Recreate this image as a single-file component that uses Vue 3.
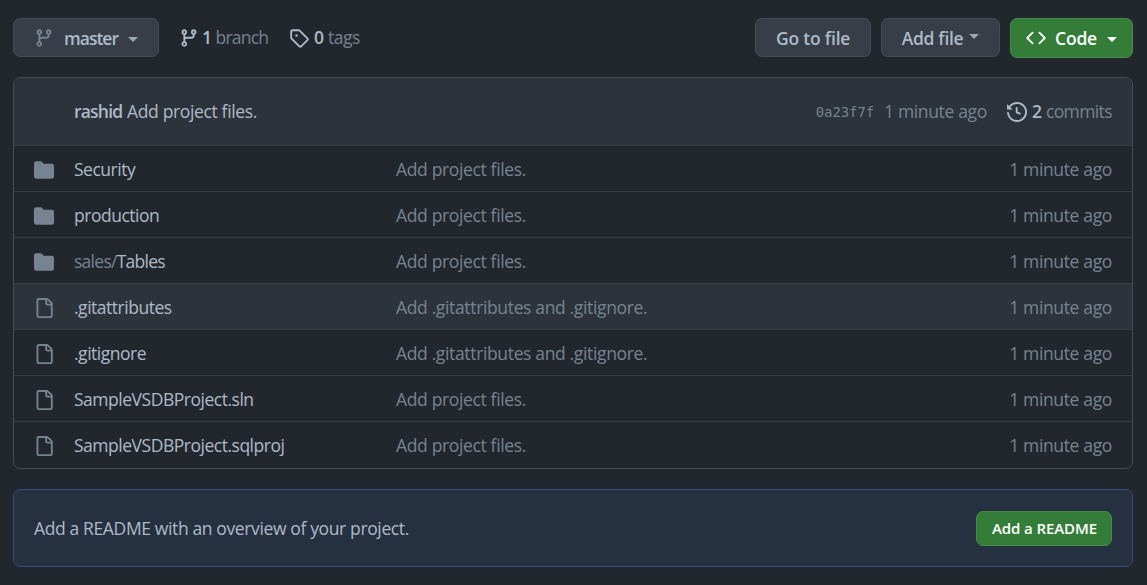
<script setup>
const paths = {
  branch: 'M11.75 2.5a.75.75 0 100 1.5.75.75 0 000-1.5zm-2.25.75a2.25 2.25 0 113 2.122V6A2.5 2.5 0 0110 8.5H6a1 1 0 00-1 1v1.128a2.251 2.251 0 11-1.5 0V5.372a2.25 2.25 0 111.5 0v1.836A2.492 2.492 0 016 7h4a1 1 0 001-1v-.628A2.25 2.25 0 019.5 3.25zM4.25 12a.75.75 0 100 1.5.75.75 0 000-1.5zM3.5 3.25a.75.75 0 111.5 0 .75.75 0 01-1.5 0z',
  tag: 'M2.5 7.775V2.75a.25.25 0 01.25-.25h5.025a.25.25 0 01.177.073l6.25 6.25a.25.25 0 010 .354l-5.025 5.025a.25.25 0 01-.354 0l-6.25-6.25a.25.25 0 01-.073-.177zm-1.5 0V2.75C1 1.784 1.784 1 2.75 1h5.025c.464 0 .91.184 1.238.513l6.25 6.25a1.75 1.75 0 010 2.474l-5.026 5.026a1.75 1.75 0 01-2.474 0l-6.25-6.25A1.75 1.75 0 011 7.775zM6 5a1 1 0 100 2 1 1 0 000-2z',
  code: 'M4.72 3.22a.75.75 0 011.06 1.06L2.06 8l3.72 3.72a.75.75 0 11-1.06 1.06L.47 8.53a.75.75 0 010-1.06l4.25-4.25zm6.56 0a.75.75 0 10-1.06 1.06L13.94 8l-3.72 3.72a.75.75 0 101.06 1.06l4.25-4.25a.75.75 0 000-1.06l-4.25-4.25z',
  history: 'M1.643 3.143L.427 1.927A.25.25 0 000 2.104V5.75c0 .138.112.25.25.25h3.646a.25.25 0 00.177-.427L2.715 4.215a6.5 6.5 0 11-1.18 4.458.75.75 0 10-1.493.154 8.001 8.001 0 101.6-5.684zM7.75 4a.75.75 0 01.75.75v2.992l2.028.812a.75.75 0 01-.557 1.392l-2.5-1A.75.75 0 017 8.25v-3.5A.75.75 0 017.75 4z',
  folder: 'M1.75 1A1.75 1.75 0 000 2.75v10.5C0 14.216.784 15 1.75 15h12.5A1.75 1.75 0 0016 13.25v-8.5A1.75 1.75 0 0014.25 3h-6.5a.25.25 0 01-.2-.1l-.9-1.2c-.33-.44-.85-.7-1.4-.7h-3.5z',
  file: 'M2 1.75C2 .784 2.784 0 3.75 0h6.586c.464 0 .909.184 1.237.513l2.914 2.914c.329.328.513.773.513 1.237v9.586A1.75 1.75 0 0113.25 16h-9.5A1.75 1.75 0 012 14.25V1.75zm1.75-.25a.25.25 0 00-.25.25v12.5c0 .138.112.25.25.25h9.5a.25.25 0 00.25-.25V6h-2.75A1.75 1.75 0 019 4.25V1.5H3.75zm6.75.062V4.25c0 .138.112.25.25.25h2.688a.252.252 0 00-.011-.013l-2.914-2.914a.272.272 0 00-.013-.011z',
}

const both = 'Add .gitattributes and .gitignore.'
const project = 'Add project files.'
const rows = [
  { icon: 'folder', name: 'Security', message: project },
  { icon: 'folder', name: 'production', message: project },
  { icon: 'folder', prefix: 'sales/', name: 'Tables', message: project },
  { icon: 'file', name: '.gitattributes', message: both, active: true },
  { icon: 'file', name: '.gitignore', message: both },
  { icon: 'file', name: 'SampleVSDBProject.sln', message: project },
  { icon: 'file', name: 'SampleVSDBProject.sqlproj', message: project },
]
</script>

<template>
  <main class="repo">
    <div class="toolbar">
      <button class="btn master">
        <svg class="icon" viewBox="0 0 16 16"><path :d="paths.branch" /></svg>
        <span>master</span><i class="caret"></i>
      </button>
      <a class="stat branches">
        <svg class="icon" viewBox="0 0 16 16"><path :d="paths.branch" /></svg>
        <b>1</b><span>branch</span>
      </a>
      <a class="stat tags">
        <svg class="icon" viewBox="0 0 16 16"><path :d="paths.tag" /></svg>
        <b>0</b><span>tags</span>
      </a>
      <div class="actions">
        <button class="btn goto"><span>Go to file</span></button>
        <button class="btn add"><span>Add file</span><i class="caret"></i></button>
        <button class="btn primary code">
          <svg class="icon" viewBox="0 0 16 16"><path :d="paths.code" /></svg>
          <span>Code</span><i class="caret"></i>
        </button>
      </div>
    </div>

    <section class="files">
      <header class="commit">
        <b class="author">rashid</b>
        <span class="title">Add project files.</span>
        <code class="sha">0a23f7f</code>
        <span class="ago">1 minute ago</span>
        <a class="stat commits">
          <svg class="icon" viewBox="0 0 16 16"><path :d="paths.history" /></svg>
          <b>2</b><span>commits</span>
        </a>
      </header>
      <div v-for="row in rows" :key="row.name" class="row" :class="{ active: row.active }">
        <svg class="icon" viewBox="0 0 16 16"><path :d="paths[row.icon]" /></svg>
        <span class="name" :class="{ nested: row.prefix }"><span v-if="row.prefix" class="prefix">{{ row.prefix }}</span>{{ row.name }}</span>
        <span class="message">{{ row.message }}</span>
        <span class="ago">1 minute ago</span>
      </div>
    </section>

    <section class="readme">
      <span class="hint">Add a README with an overview of your project.</span>
      <button class="btn primary small"><span>Add a README</span></button>
    </section>
  </main>
</template>

<style>
body {
  background: #22272e;
}
</style>

<style scoped>
.repo {
  box-sizing: border-box;
  height: 585px;
  padding: 18px 14px 0 13px;
  overflow: hidden;
  background: #22272e;
  color: #adbac7;
  font-family: "Open Sans", "Noto Sans", sans-serif;
  font-size: 17.5px;
  line-height: 26px;
  letter-spacing: -0.35px;
  white-space: nowrap;
}
.icon {
  display: block;
  flex: none;
  width: 20px;
  height: 20px;
  fill: currentColor;
  fill-rule: evenodd;
}
.toolbar {
  display: flex;
  align-items: flex-start;
  height: 59px;
}
.btn {
  display: flex;
  align-items: center;
  box-sizing: border-box;
  height: 39px;
  margin: 0;
  padding: 0 20px;
  border: 1px solid #444c56;
  border-radius: 7px;
  background: #373e47;
  color: #adbac7;
  font: inherit;
  font-weight: 600;
  letter-spacing: -0.2px;
}
.caret {
  flex: none;
  width: 0;
  height: 0;
  border: 5px solid transparent;
  border-top-color: currentColor;
  border-bottom: 0;
  opacity: 0.85;
}
.master {
  width: 146px;
  letter-spacing: -1px;
}
.master .icon {
  color: #768390;
}
.master span {
  width: 54px;
  margin-left: 10px;
  padding-top: 1px;
}
.master .caret {
  margin: 3px 0 0 10px;
}
.stat {
  display: flex;
  align-items: center;
  color: #768390;
  letter-spacing: -0.5px;
}
.stat .icon,
.stat b {
  color: #adbac7;
}
.stat b {
  width: 10px;
  margin: 0 4px 0 5px;
  font-weight: 600;
}
.stat b,
.stat span,
.author,
.title,
.name,
.message,
.ago {
  padding-bottom: 2px;
}
.toolbar .stat {
  height: 39px;
}
.branches {
  width: 89px;
  margin-left: 20px;
}
.branches span {
  letter-spacing: -0.8px;
}
.branches b {
  margin: 0 4px 0 3px;
}
.tags {
  margin-left: 21px;
}
.tags b {
  margin-right: 4px;
}
.actions {
  display: flex;
  gap: 10px;
  margin-left: auto;
}
.goto {
  width: 116px;
}
.add {
  width: 119px;
}
.add span {
  width: 63px;
  margin-left: -1px;
  letter-spacing: -0.3px;
}
.add .caret {
  margin: -3px 0 0 5px;
}
.primary {
  border-color: #46894a;
  background: #347d39;
  color: #fff;
}
.code {
  width: 123px;
  height: 40px;
  padding: 0 15px;
}
.code span {
  width: 43px;
  margin-left: 9px;
}
.code .caret {
  margin: 2px 0 0 10px;
  opacity: 1;
}
.files {
  overflow: hidden;
  border: 1px solid #444c56;
  border-radius: 7px;
}
.commit {
  display: flex;
  align-items: center;
  height: 67px;
  padding: 0 20px 0 60px;
  background: #2d333b;
}
.author {
  width: 49px;
  margin-right: 4px;
  font-weight: 600;
  letter-spacing: -0.8px;
}
.sha {
  margin-left: auto;
  padding-top: 1px;
  color: #768390;
  font-family: "DejaVu Sans Mono", monospace;
  font-size: 14px;
  letter-spacing: -0.1px;
}
.commit .ago {
  margin-left: 10px;
}
.commits {
  margin-left: 20px;
}
.commits span {
  letter-spacing: -0.6px;
}
.row {
  display: grid;
  grid-template-columns: 20px 302px 1fr auto;
  column-gap: 20px;
  align-items: center;
  height: 43px;
  padding: 2px 20px 0;
  border-top: 1px solid #373e47;
}
.row:last-child {
  padding-bottom: 1px;
}
.row.active {
  background: #2d333b;
}
.name {
  letter-spacing: -0.48px;
}
.name.nested {
  letter-spacing: -0.73px;
}
.row .icon,
.prefix,
.message,
.ago {
  color: #768390;
}
.readme {
  display: flex;
  align-items: center;
  justify-content: space-between;
  box-sizing: border-box;
  height: 78px;
  margin-top: 20px;
  padding: 0 20px;
  border: 1px solid #2e4f80;
  border-radius: 7px;
  background: #253040;
}
.hint {
  padding-bottom: 1px;
  letter-spacing: -0.37px;
}
.small {
  width: 136px;
  height: 35px;
  padding: 0 15px;
  font-size: 15px;
  letter-spacing: -0.1px;
}
</style>
